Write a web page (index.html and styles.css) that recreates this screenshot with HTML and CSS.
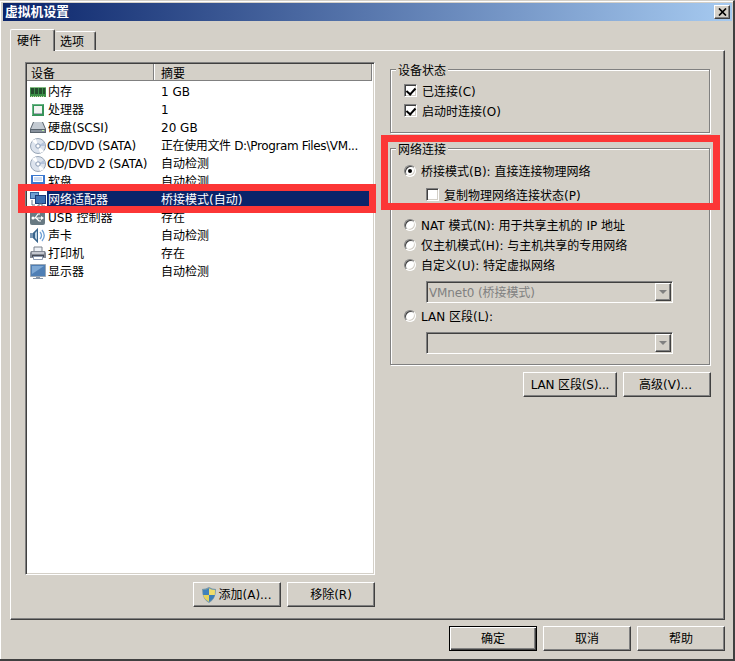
FILE: index.html
```html
<!DOCTYPE html>
<html lang="zh-CN">
<head>
    <meta charset="UTF-8">
    <title>虚拟机设置</title>
    <link rel="stylesheet" href="styles.css">
</head>
<body>
    <div class="window">
        <div class="titlebar">
            <span>虚拟机设置</span>
            <button class="close"><svg width="9" height="8" viewBox="0 0 9 8"><path d="M1 0.5L8 7.5M8 0.5L1 7.5" stroke="#000" stroke-width="1.7"/></svg></button>
        </div>

        <div class="tabs">
            <div class="tab active">硬件</div>
            <div class="tab">选项</div>
        </div>

        <div class="panel">
            <!-- Hardware list -->
            <div class="left">
                <div class="list">
                    <div class="head"><span class="device">设备</span><span class="summary">摘要</span></div>
                    <div class="row">
                        <svg class="icon" viewBox="0 0 16 16"><path d="M0 3h16v10H0z" fill="#3c8f48"/><path d="M1 4h3v6H1zM5 4h3v6H5zM9 4h3v6H9zM13 4h2v6h-2z" fill="#244d2d"/><path d="M1 12.500h14" stroke="#c5dba0" stroke-dasharray="1 1"/><path d="M0 3.500h16" stroke="#83bd81"/></svg>
                        <span class="name">内存</span><span>1 GB</span>
                    </div>
                    <div class="row">
                        <svg class="icon" viewBox="0 0 16 16"><path d="M2 2h12v12H2z" fill="#37945a"/><path d="M4 4h8v7H4z" fill="#f2f4f2"/><path d="M4 11h8v1H4z" fill="#aab"/><path d="M2.500 13V2.500h11" fill="none" stroke="#69b784"/></svg>
                        <span class="name">处理器</span><span>1</span>
                    </div>
                    <div class="row">
                        <svg class="icon" viewBox="0 0 16 16"><path d="M3 2h10l3 7v4H0V9z" fill="#59636d"/><path d="M4 2h8l3 7H1z" fill="#c3cad2"/><path d="M1 10h14v2H1z" fill="#87919d"/><path d="M12 10h2v1h-2z" fill="#bdf0a1"/></svg>
                        <span class="name">硬盘(SCSI)</span><span>20 GB</span>
                    </div>
                    <div class="row">
                        <svg class="icon" viewBox="0 0 16 16"><circle cx="8" cy="8" r="7.500" fill="#dce3ed" stroke="#98a5b5"/><path d="M8 8L2 3a8 8 0 0 1 4-2zM8 8l6 5a8 8 0 0 1-4 2z" fill="#fff"/><path d="M8 8L14 4l1 4z" fill="#b5c4dc"/><circle cx="8" cy="8" r="2.200" fill="#fff" stroke="#8799b3"/></svg>
                        <span class="name latin">CD/DVD (SATA)</span><span class="path">正在使用文件 D:\Program Files\VM...</span>
                    </div>
                    <div class="row">
                        <svg class="icon" viewBox="0 0 16 16"><circle cx="8" cy="8" r="7.500" fill="#dce3ed" stroke="#98a5b5"/><path d="M8 8L2 3a8 8 0 0 1 4-2zM8 8l6 5a8 8 0 0 1-4 2z" fill="#fff"/><path d="M8 8L14 4l1 4z" fill="#b5c4dc"/><circle cx="8" cy="8" r="2.200" fill="#fff" stroke="#8799b3"/></svg>
                        <span class="name latin">CD/DVD 2 (SATA)</span><span>自动检测</span>
                    </div>
                    <div class="row">
                        <svg class="icon" viewBox="0 0 16 16"><path d="M1 1h14v14H1z" fill="#3b78cf"/><path d="M3 2h10v6H3z" fill="#fff"/><path d="M4 4h8M4 6h8" stroke="#9db9e4"/><path d="M4 10h8v5H4z" fill="#d9e2ef"/></svg>
                        <span class="name">软盘</span><span>自动检测</span>
                    </div>
                    <div class="row selected">
                        <svg class="icon" viewBox="0 0 16 16"><path d="M0 0h9v7H0z" fill="#315f9c"/><path d="M1 1h7v5H1z" fill="#6d9fd2"/><path d="M5 3h11v9H5z" fill="#173a78"/><path d="M6 4h9v7H6z" fill="#3c6eb0"/><path d="M2 8v5h3M9 12h3v2h3v1H7v-1h2z" fill="none" stroke="#66758b"/></svg>
                        <span class="name">网络适配器</span><span>桥接模式(自动)</span>
                    </div>
                    <div class="row">
                        <svg class="icon" viewBox="0 0 16 16"><rect x="0" y="0" width="15" height="15" rx="2" fill="#687a83"/><path d="M2 8h10M5 8l3-4h2M6 8l3 3h2" fill="none" stroke="#fff" stroke-width="1.200"/><path d="M11 6l3 2-3 2z" fill="#fff"/><circle cx="3" cy="8" r="1.500" fill="#fff"/></svg>
                        <span class="name">USB 控制器</span><span>存在</span>
                    </div>
                    <div class="row">
                        <svg class="icon" viewBox="0 0 16 16"><path d="M0 5h3l5-5v15l-5-5H0z" fill="#7795b3"/><path d="M3 5l5-5v15l-5-5z" fill="#38658c"/><path d="M5 5l2-2v9l-2-2z" fill="#bdd3e5"/><path d="M10 4q3 3.500 0 7M12 2q4.500 5.500 0 11" fill="none" stroke="#6fa0d5" stroke-width="1.300"/></svg>
                        <span class="name">声卡</span><span>自动检测</span>
                    </div>
                    <div class="row">
                        <svg class="icon" viewBox="0 0 16 16"><path d="M4 1h8v5H4z" fill="#eef1f6" stroke="#7b828c"/><path d="M1 5h14l1 2v5H0V7z" fill="#848994"/><path d="M2 6h12v2H2z" fill="#c4c7cf"/><path d="M2 9h12v2H2z" fill="#454b57"/><path d="M3.500 10.500h9v3h-9z" fill="#fff" stroke="#8d9ab1"/></svg>
                        <span class="name">打印机</span><span>存在</span>
                    </div>
                    <div class="row">
                        <svg class="icon" viewBox="0 0 16 16"><path d="M.5.500h15v12H.5z" fill="#4f7fb5" stroke="#9aa8b7"/><path d="M2 2h12L2 10z" fill="#7ea8d4"/><path d="M6 13h4v1h3v1H3v-1h3z" fill="#8494a7"/></svg>
                        <span class="name">显示器</span><span>自动检测</span>
                    </div>
                </div>
                <div class="buttons">
                    <button class="btn add"><svg width="14" height="16" viewBox="0 0 14 16"><path d="M7 0Q10 2 14 2Q14 12 7 16Q0 12 0 2Q4 2 7 0z" fill="#7899a8"/><path d="M7 1.500V8H1.200L1 3Q4 3 7 1.500z" fill="#3f82bd"/><path d="M7 1.500Q10 3 13 3L12.800 8H7z" fill="#f0dc69"/><path d="M1.200 8H7v6.800Q2 12 1.200 8z" fill="#e5d35e"/><path d="M7 8h5.800Q12 12 7 14.800z" fill="#3c7db8"/></svg>添加(A)...</button>
                    <button class="btn">移除(R)</button>
                </div>
            </div>

            <!-- Adapter options -->
            <div class="right">
                <fieldset class="status">
                    <legend>设备状态</legend>
                    <label class="option"><i class="check on"></i>已连接(C)</label>
                    <label class="option"><i class="check on"></i>启动时连接(O)</label>
                </fieldset>
                <fieldset class="network">
                    <legend>网络连接</legend>
                    <label class="option"><i class="radio on"></i>桥接模式(B): 直接连接物理网络</label>
                    <label class="option sub"><i class="check"></i>复制物理网络连接状态(P)</label>
                    <label class="option"><i class="radio"></i>NAT 模式(N): 用于共享主机的 IP 地址</label>
                    <label class="option"><i class="radio"></i>仅主机模式(H): 与主机共享的专用网络</label>
                    <label class="option"><i class="radio"></i>自定义(U): 特定虚拟网络</label>
                    <div class="combo"><span>VMnet0 (桥接模式)</span><b></b></div>
                    <label class="option lan"><i class="radio"></i>LAN 区段(L):</label>
                    <div class="combo"><span></span><b></b></div>
                </fieldset>
                <div class="buttons">
                    <button class="btn lan-btn">LAN 区段(S)...</button>
                    <button class="btn">高级(V)...</button>
                </div>
            </div>
        </div>

        <div class="footer">
            <button class="btn default">确定</button>
            <button class="btn">取消</button>
            <button class="btn">帮助</button>
        </div>

        <div class="mark mark-row"></div>
        <div class="mark mark-bridge"></div>
    </div>
</body>
</html>
```

FILE: styles.css
```css
:root {
    --face: #d4d0c8;
    --shadow: #808080;
    --dark: #404040;
    --red: #fc3636;
}

* {
    box-sizing: border-box;
}

body {
    margin: 0;
    background: var(--face);
    color: #000;
    font: 12px/16px "DejaVu Sans", "Noto Sans CJK SC", sans-serif;
}

.window {
    position: relative;
    width: 735px;
    height: 661px;
    padding: 1px 1px 0 2px;
    border-top: 1px solid #d4d0c8;
    border-right: 2px solid var(--dark);
    border-bottom: 2px solid var(--dark);
    box-shadow: inset 1px 1px 0 #fff;
}

.titlebar {
    display: flex;
    align-items: center;
    justify-content: space-between;
    height: 18px;
    margin: 1px 0 0 1px;
    padding: 0 2px 0 2px;
    background: linear-gradient(to right, #0a246a, #a6caf0);
    color: #fff;
    font-weight: bold;
    font-size: 12.8px;
}

.close {
    display: flex;
    align-items: center;
    justify-content: center;
    width: 16px;
    height: 14px;
    padding: 0;
    background: var(--face);
    border: 1px solid;
    border-color: #fff var(--dark) var(--dark) #fff;
    box-shadow: inset -1px -1px 0 var(--shadow);
}

/* Tabs */
.tabs {
    display: flex;
    align-items: flex-end;
    height: 29px;
    padding-left: 8px;
}

.tab {
    width: 41px;
    height: 19px;
    padding: 2px 0 0 4px;
    border: 1px solid;
    border-color: #fff var(--dark) transparent transparent;
    border-bottom: 0;
    border-radius: 2px 2px 0 0;
    box-shadow: inset -1px 0 0 var(--shadow);
}

.tab.active {
    position: relative;
    width: 45px;
    height: 22px;
    margin-bottom: -1px;
    padding: 3px 0 0 6px;
    background: var(--face);
    border-left-color: #fff;
}

.panel {
    display: flex;
    width: 715px;
    height: 570px;
    margin-left: 8px;
    padding: 11px 0 0 14px;
    border: 1px solid;
    border-color: #fff var(--dark) var(--dark) #fff;
    box-shadow: inset -1px -1px 0 var(--shadow);
}

/* Hardware list */
.left {
    width: 350px;
}

.list {
    height: 513px;
    padding: 1px;
    background: #fff;
    border: 1px solid;
    border-color: var(--shadow) #fff #fff var(--shadow);
    box-shadow: inset 1px 1px 0 var(--dark), inset -1px -1px 0 var(--face);
}

.head {
    display: flex;
    width: 345px;
    height: 17px;
    margin-bottom: 2px;
    line-height: 21px;
    background: var(--face);
    border-right: 1px solid var(--shadow);
    border-bottom: 1px solid var(--shadow);
    overflow: hidden;
}

.device {
    width: 127px;
    padding-left: 4px;
    border-right: 1px solid var(--shadow);
}

.summary {
    flex: 1;
    padding-left: 6px;
    border-left: 1px solid #fff;
}

.row {
    display: flex;
    align-items: center;
    height: 18px;
    white-space: nowrap;
}

.icon {
    width: 16px;
    height: 16px;
    margin-left: 3px;
}

.name {
    width: 115px;
    padding-left: 2px;
    line-height: 18px;
}

.latin {
    padding-left: 1px;
    letter-spacing: -0.15px;
}

.path {
    letter-spacing: -0.38px;
}

.row.selected {
    background: linear-gradient(to right, #fff 20px, #0a246a 20px);
    color: #fff;
}

/* Buttons */
.buttons {
    display: flex;
    justify-content: flex-end;
    gap: 6px;
    margin-top: 7px;
}

.btn {
    display: flex;
    align-items: center;
    justify-content: center;
    width: 88px;
    height: 25px;
    padding: 0;
    background: var(--face);
    border: 1px solid;
    border-color: #fff var(--dark) var(--dark) #fff;
    box-shadow: inset -1px -1px 0 var(--shadow);
    color: #000;
    font: inherit;
    white-space: nowrap;
}

.btn.default {
    border-color: #000;
    box-shadow: inset 1px 1px 0 #fff, inset -1px -1px 0 var(--dark), inset -2px -2px 0 var(--shadow);
}

.add svg {
    margin-right: 2px;
}

.lan-btn {
    width: 94px;
    letter-spacing: -0.15px;
}

/* Options */
.right {
    width: 321px;
    margin-left: 15px;
}

.right .btn:last-child {
    padding-right: 3px;
}

fieldset {
    width: 320px;
    margin: 0;
    padding: 0 0 0 14px;
    border: 1px solid var(--shadow);
    box-shadow: 1px 1px 0 #fff, inset 1px 1px 0 #fff;
}

legend {
    height: 14px;
    margin-left: -9px;
    padding: 0 2px;
    line-height: 19px;
    background: var(--face);
}

.status {
    height: 71px;
}

.network {
    height: 224px;
    margin-top: 8px;
}

.option {
    display: flex;
    align-items: center;
    height: 20px;
    white-space: nowrap;
}

.status .option:nth-of-type(1) {
    margin-top: 6px;
}

.network .option:nth-of-type(1) {
    margin-top: 6px;
    height: 22px;
}

.network .sub {
    height: 24px;
    margin: 1px 0 8px 22px;
}

.check,
.radio {
    width: 13px;
    height: 13px;
    margin: -3px 5px 0 -1px;
    background: #fff;
    border: 1px solid;
    border-color: var(--shadow) #fff #fff var(--shadow);
    box-shadow: inset 1px 1px 0 var(--dark), inset -1px -1px 0 var(--face);
}

.check.on::after {
    content: "";
    display: block;
    width: 4px;
    height: 7px;
    margin: 1px 0 0 3px;
    border: solid #000;
    border-width: 0 2px 2px 0;
    transform: rotate(42deg);
}

.radio {
    width: 12px;
    height: 12px;
    margin-right: 5px;
    border-radius: 50%;
}

.radio.on::after {
    content: "";
    display: block;
    width: 4px;
    height: 4px;
    margin: 3px;
    background: #000;
    border-radius: 50%;
}

.combo {
    display: flex;
    justify-content: space-between;
    width: 247px;
    height: 22px;
    margin: 5px 0 0 21px;
    padding: 1px;
    color: var(--shadow);
    line-height: 20px;
    letter-spacing: -0.1px;
    border: 1px solid;
    border-color: var(--shadow) #fff #fff var(--shadow);
    box-shadow: inset 1px 1px 0 var(--dark);
}

.combo span {
    padding-left: 1px;
}

.combo b {
    width: 16px;
    height: 18px;
    padding: 6px 0 0 3px;
    border: 1px solid;
    border-color: #fff var(--dark) var(--dark) #fff;
    box-shadow: inset -1px -1px 0 var(--shadow);
}

.combo b::after {
    content: "";
    display: block;
    width: 0;
    border: 4px solid transparent;
    border-top-color: var(--shadow);
    border-bottom: 0;
}

.option.lan {
    margin-top: 4px;
}

.footer {
    display: flex;
    justify-content: flex-end;
    gap: 6px;
    margin: 6px 7px 0 0;
}

/* Highlight boxes */
.mark {
    position: absolute;
    border: 7px solid var(--red);
}

.mark-row {
    left: 18px;
    top: 183px;
    width: 358px;
    height: 29px;
}

.mark-bridge {
    left: 381px;
    top: 134px;
    width: 339px;
    height: 75px;
}
```
